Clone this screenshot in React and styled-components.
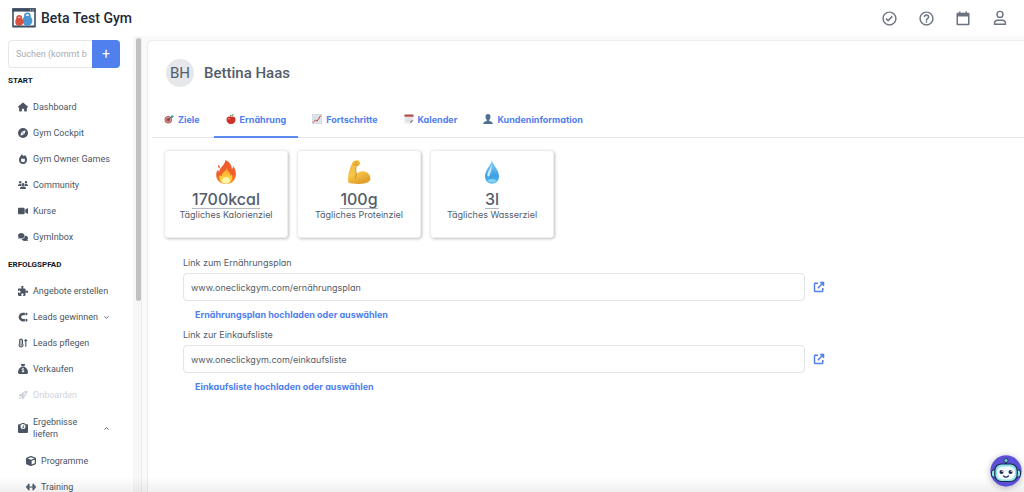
import styled, { createGlobalStyle, css } from "styled-components";
import {
    FaHouse,
    FaCompass,
    FaUsers,
    FaVideo,
    FaComments,
    FaPuzzlePiece,
    FaMagnet,
    FaTemperatureArrowUp,
    FaSackDollar,
    FaWeightScale,
    FaCube,
} from "react-icons/fa6";
import { IoRocketSharp } from "react-icons/io5";
import { BiCheckCircle, BiHelpCircle } from "react-icons/bi";
import { ChevronDown, ChevronUp } from "lucide-react";

const Logo = () => (
    <svg width="24" height="20" viewBox="0 0 24 20" aria-hidden="true">
        <rect x="1" y="1" width="22" height="17.5" fill="#fff" stroke="#3f4d63" strokeWidth="1.6" />
        <rect x="0.4" y="0.4" width="23.2" height="3.2" fill="#3f4d63" />
        <path d="M18 2h1M20.5 2h1" stroke="#fff" strokeWidth="0.9" />
        <path d="M13 9.5V7.4Q13 5.4 15.4 5.4t2.4 2v2.1" fill="none" stroke="#4b97d2" strokeWidth="1.8" />
        <circle cx="15.4" cy="12.8" r="5" fill="#4b97d2" />
        <path d="M5.2 12V9.4Q5.2 7.8 7.2 7.8T9.2 9.400V12" fill="none" stroke="#d9503f" strokeWidth="1.8" />
        <circle cx="7.2" cy="13.8" r="4" fill="#d9503f" />
        <path d="M1 18.5h22" stroke="#3f4d63" strokeWidth="1.6" />
    </svg>
);

const CalendarIcon = () => (
    <svg width="14" height="15" viewBox="0 0 14 15" fill="currentColor" aria-hidden="true">
        <path fillRule="evenodd" d="M1.5 1.8H3V.4h1.5v1.4h5V.4H11v1.4h1.5Q13.5 1.8 13.5 2.8v10.5q0 1-1 1h-11q-1 0-1-1V2.8q0-1 1-1zM2 5.6v7.2h10V5.6z" />
    </svg>
);

const PersonIcon = () => (
    <svg width="14" height="16" viewBox="0 0 14 16" fill="none" stroke="currentColor" strokeWidth="1.4" aria-hidden="true">
        <circle cx="7" cy="4.4" r="3" />
        <path d="M1.5 14.2v-.7q0-3.2 3.2-3.2h4.6q3.2 0 3.2 3.2v.7z" strokeLinejoin="round" />
    </svg>
);

const OpenIcon = () => (
    <svg width="12" height="12" viewBox="0 0 12 12" fill="none" stroke="currentColor" strokeWidth="1.5" aria-hidden="true">
        <path d="M5 2.2H2.2Q1.500 2.200 1.500 2.900v6.900q0 .7.7.7h6.900q.7 0 .7-.7V7M4.800 7.200l5.400-5.400M7 1.500h3.500V5" />
    </svg>
);

const FlameIcon = () => (
    <svg width="10" height="10" viewBox="0 0 20 20" aria-hidden="true">
        <path fill="currentColor" fillRule="evenodd" d="M8 0c.4 2 2.2 3 3.8 4.3L13.5 2C16.5 4.5 18 8 18 11.5a8 8.3 0 0 1-16 0C2 7.5 4.5 5 8 0zM7.5 9C6.400 10.300 6 11.200 6 12.300a4 4 0 0 0 8 0c0-1.300-.4-2.400-1.100-3.300l-1.600 1.600L9.600 8 8.400 10.200z" />
    </svg>
);

const BarbellIcon = () => (
    <svg width="11" height="10" viewBox="0 0 22 20" fill="currentColor" aria-hidden="true">
        <path d="M0 8.5h2V11.5H0zM2 5h2v10H2zM4.5 3h3.2v14H4.5zM7.7 8.7h6.6v2.6H7.7zM14.3 3h3.2v14h-3.2zM18 5h2v10h-2zM20 8.5h2v3h-2z" />
    </svg>
);

const Fire = ({ size }) => (
    <svg width={size} height={size} viewBox="0 0 24 24" aria-hidden="true">
        <defs>
            <linearGradient id="fireOuter" x1="0" y1="0" x2="0" y2="1">
                <stop offset="0" stopColor="#ef5a32" />
                <stop offset="0.6" stopColor="#f0602c" />
                <stop offset="1" stopColor="#f99a24" />
            </linearGradient>
            <linearGradient id="fireInner" x1="0" y1="0" x2="0" y2="1">
                <stop offset="0" stopColor="#fb9b28" />
                <stop offset="0.7" stopColor="#fdd33d" />
                <stop offset="1" stopColor="#fff19a" />
            </linearGradient>
        </defs>
        <path fill="url(#fireOuter)" d="M11.3 0c4 1.6 6.4 4.7 6.6 9 .9-.5 1.2-1.6 1-3 2.200 2 3 5 3 8.300C21.900 20 18 24 12 24S2.200 20.400 2.200 15c0-2.200.6-4 1.800-5.300.2 1 .6 1.600 1.300 2C5.200 7.500 11.500 5 11.300 0z" />
        <path fill="#ef6a3e" d="M4.3 4.8c1.5.8 2 2 1.2 3.600-1.400-.7-2-2-1.200-3.600z" />
        <path fill="url(#fireInner)" d="M12.6 7.5c.2 3 3.8 4.7 3.8 8.2.9-.3 1.300-1 1.400-1.900 1.500 4.800-.5 9.600-5.700 9.700-5.300 0-7.600-4-6.300-8.500.6.800 1.200 1.100 2 1.100-.5-3.900 4.700-4.700 4.800-8.600z" />
        <ellipse cx="12" cy="20.3" rx="3.5" ry="3.2" fill="#fff4ae" />
    </svg>
);

const Biceps = ({ size }) => (
    <svg width={size} height={size} viewBox="0 0 24 24" aria-hidden="true">
        <defs>
            <linearGradient id="skin" x1="0" y1="0" x2="0.4" y2="1">
                <stop offset="0" stopColor="#f0b83c" />
                <stop offset="0.6" stopColor="#f6c648" />
                <stop offset="1" stopColor="#e3a02c" />
            </linearGradient>
        </defs>
        <path fill="url(#skin)" d="M5.5 2.5C6.5.8 9.5-.3 11.4.6c1.7.8 2 2.7 1 4.4-.6 1.2-1.8 1.6-3.2 1.3C8.600 9 8.800 11.400 9.400 14c2.400-2.800 6-3.300 9-2.300 3.800 1.200 5.700 5.300 4.800 8-1.200 3-5.500 4.100-10.700 4.200-4.500.1-9-.2-11.200-1.400C.2 15.500 2.500 8.500 5.500 2.500z" />
        <path fill="none" stroke="#c98420" strokeWidth="0.8" strokeLinecap="round" d="M6.3 4.2c1.5 1 3.5.9 5 .1M8.2 2c.5.7 1.2 1 2.1.9M9.4 14c-.8 1.3-1 2.6-.9 4M9 6.4c-.4 2.7-.2 5.2.4 7.6" />
    </svg>
);

const Drop = ({ size }) => (
    <svg width={size} height={size} viewBox="0 0 24 24" aria-hidden="true">
        <defs>
            <linearGradient id="water" x1="0" y1="0" x2="0" y2="1">
                <stop offset="0" stopColor="#8fd0f2" />
                <stop offset="0.65" stopColor="#3f9fe5" />
                <stop offset="1" stopColor="#55b9f2" />
            </linearGradient>
        </defs>
        <path fill="url(#water)" d="M12 .5c1.5 5 7 10 7 15.8 0 4.4-3 7.4-7 7.4s-7-3-7-7.4C5 10.5 10.5 5.5 12 .5z" />
        <path fill="#c9ebfa" d="M11.8 4.500c.4 4-1.200 7.500-2 10.600-.4 1.900-2.600 1.700-2.500-.2C7.500 11.500 10.700 8.500 11.800 4.500z" />
        <ellipse cx="12" cy="20.8" rx="4" ry="1.7" fill="#82d4f7" />
    </svg>
);

const TargetGlyph = () => (
    <svg width="10" height="10" viewBox="0 0 20 20" aria-hidden="true">
        <circle cx="8.5" cy="11.5" r="7.5" fill="#b5605c" />
        <circle cx="8.5" cy="11.5" r="5.4" fill="#d9b5b2" />
        <circle cx="8.5" cy="11.5" r="4.2" fill="#b04848" />
        <path d="M8.5 11.5l6-6" stroke="#45505c" strokeWidth="2" />
        <path d="M13 6.5L16.5 1l.8 2.5 2.7.5-3.5 3.8z" fill="#3a8fb5" />
    </svg>
);

const AppleGlyph = () => (
    <svg width="10" height="10" viewBox="0 0 20 20" aria-hidden="true">
        <path fill="#cf3027" d="M10 6C6 3.5 1 5.5 1 11c0 4.5 3.5 9 6.500 9 1 0 1.700-.5 2.500-.5s1.500.5 2.500.5c3 0 6.500-4.500 6.500-9 0-5.500-5-7.500-9-5z" />
        <path d="M10 6.5Q9.8 4 8.5 2" stroke="#6b3b20" strokeWidth="1.3" fill="none" />
        <path fill="#5c9d37" d="M10.5 4C10.8 1.5 13 0 15.5.3 15.3 2.8 13 4.3 10.5 4z" />
        <ellipse cx="6" cy="9.5" rx="2" ry="1.6" fill="#f08a78" />
    </svg>
);

const ChartGlyph = () => (
    <svg width="10" height="10" viewBox="0 0 20 20" aria-hidden="true">
        <rect x="0.5" y="0.5" width="19" height="19" fill="#e8edf0" stroke="#bcc7ce" />
        <path d="M5.5 1v18M10 1v18M14.5 1v18M1 5.5h18M1 10h18M1 14.5h18" stroke="#c7d3da" />
        <path d="M2 17l5-5 3 2.5L17.5 3" fill="none" stroke="#c4413c" strokeWidth="2" />
    </svg>
);

const CalendarGlyph = () => (
    <svg width="10" height="10" viewBox="0 0 20 20" aria-hidden="true">
        <path d="M1 1h18v12l-6 6H1z" fill="#e9e9e9" />
        <path d="M1 1h18v4.5H1z" fill="#b0504e" />
        <path d="M19 12.5l-6.5 6.5 1-5.5z" fill="#66706b" />
        <path d="M4 9.5h12M4 13h8" stroke="#cfd3d3" />
    </svg>
);

const BustGlyph = () => (
    <svg width="10" height="10" viewBox="0 0 20 20" aria-hidden="true">
        <path fill="#4f7192" d="M10 0c3.3 0 5 2.3 5 5.5 0 2.6-1 4.8-2.5 6V14c3 .8 6.5 1.7 7.5 6H0c1-4.3 4.5-5.2 7.5-6v-2.5C6 10.3 5 8.1 5 5.500 5 2.300 6.700 0 10 0z" />
    </svg>
);

const Robot = () => (
    <svg width="32" height="32" viewBox="0 0 32 32" aria-hidden="true">
        <circle cx="16" cy="16" r="15.7" fill="#5b50d6" />
        <path d="M16 10V6" stroke="#1d2b4f" strokeWidth="1.4" />
        <circle cx="16" cy="5.5" r="2" fill="#6fd3d8" stroke="#1d2b4f" strokeWidth="0.8" />
        <rect x="1.5" y="15" width="5" height="7" rx="2" fill="#8edfe6" stroke="#1d2b4f" strokeWidth="1" />
        <rect x="25.5" y="15" width="5" height="7" rx="2" fill="#8edfe6" stroke="#1d2b4f" strokeWidth="1" />
        <rect x="4.8" y="9" width="22.4" height="17.5" rx="6.5" fill="#8ae3e6" stroke="#1d2b4f" strokeWidth="1.2" />
        <rect x="7" y="11.5" width="18" height="13" rx="5.5" fill="#f4fbff" />
        <circle cx="11.5" cy="17" r="2" fill="#1f2850" />
        <circle cx="20.5" cy="17" r="2" fill="#1f2850" />
        <circle cx="12.2" cy="16.3" r="0.7" fill="#fff" />
        <circle cx="21.2" cy="16.3" r="0.7" fill="#fff" />
        <path d="M13.5 21q2.5 2.2 5 0" fill="none" stroke="#1f2850" strokeWidth="1.2" strokeLinecap="round" />
    </svg>
);

const startLinks = [
    { label: "Dashboard", icon: <FaHouse /> },
    { label: "Gym Cockpit", icon: <FaCompass /> },
    { label: "Gym Owner Games", icon: <FlameIcon /> },
    { label: "Community", icon: <FaUsers /> },
    { label: "Kurse", icon: <FaVideo /> },
    { label: "GymInbox", icon: <FaComments /> },
];

const pathLinks = [
    { label: "Angebote erstellen", icon: <FaPuzzlePiece /> },
    { label: "Leads gewinnen", icon: <FaMagnet transform="rotate(90)" />, arrow: "down" },
    { label: "Leads pflegen", icon: <FaTemperatureArrowUp /> },
    { label: "Verkaufen", icon: <FaSackDollar /> },
    { label: "Onboarden", icon: <IoRocketSharp />, muted: true },
    { label: "Ergebnisse liefern", icon: <FaWeightScale />, arrow: "up", tall: true },
    { label: "Programme", icon: <FaCube />, nested: true },
    { label: "Training", icon: <BarbellIcon />, nested: true },
];

const tabs = [
    { label: "Ziele", icon: <TargetGlyph /> },
    { label: "Ernährung", icon: <AppleGlyph />, active: true },
    { label: "Fortschritte", icon: <ChartGlyph /> },
    { label: "Kalender", icon: <CalendarGlyph /> },
    { label: "Kundeninformation", icon: <BustGlyph /> },
];

const goals = [
    { value: "1700kcal", caption: "Tägliches Kalorienziel", icon: <Fire size={24} /> },
    { value: "100g", caption: "Tägliches Proteinziel", icon: <Biceps size={24} /> },
    { value: "3l", caption: "Tägliches Wasserziel", icon: <Drop size={24} /> },
];

const fields = [
    {
        id: "plan",
        label: "Link zum Ernährungsplan",
        value: "www.oneclickgym.com/ernährungsplan",
        action: "Ernährungsplan hochladen oder auswählen",
    },
    {
        id: "shopping",
        label: "Link zur Einkaufsliste",
        value: "www.oneclickgym.com/einkaufsliste",
        action: "Einkaufsliste hochladen oder auswählen",
    },
];

const NavList = ({ items }) => (
    <List>
        {items.map((item) => (
            <li key={item.label}>
                <NavLink href="#" $muted={item.muted} $nested={item.nested} $tall={item.tall}>
                    <NavIcon>{item.icon}</NavIcon>
                    <NavText $narrow={item.tall}>{item.label}</NavText>
                    {item.arrow === "down" && <ChevronDown size={7} strokeWidth={3} />}
                    {item.arrow === "up" && <ChevronUp size={7} strokeWidth={3} />}
                </NavLink>
            </li>
        ))}
    </List>
);

const App = () => {
    return (
        <>
            <GlobalStyle />
            <Page>
                <Header>
                    <Brand href="#">
                        <Logo />
                        Beta Test Gym
                    </Brand>
                    <HeaderActions>
                        <IconButton aria-label="Aufgaben"><BiCheckCircle size={17} /></IconButton>
                        <IconButton aria-label="Hilfe"><BiHelpCircle size={17} /></IconButton>
                        <IconButton aria-label="Kalender"><CalendarIcon /></IconButton>
                        <IconButton aria-label="Profil"><PersonIcon /></IconButton>
                    </HeaderActions>
                </Header>

                <Body>
                    <Sidebar>
                        <Search>
                            <SearchInput aria-label="Suchen" placeholder="Suchen (kommt bald)" />
                            <AddButton aria-label="Hinzufügen">+</AddButton>
                        </Search>
                        <NavTitle>START</NavTitle>
                        <NavList items={startLinks} />
                        <NavTitle $spaced>ERFOLGSPFAD</NavTitle>
                        <NavList items={pathLinks} />
                    </Sidebar>
                    <ScrollTrack>
                        <ScrollThumb />
                    </ScrollTrack>

                    <Panel>
                        <Client>
                            <Avatar>BH</Avatar>
                            <ClientName>Bettina Haas</ClientName>
                        </Client>

                        <Tabs role="tablist">
                            {tabs.map((tab) => (
                                <Tab key={tab.label} role="tab" aria-selected={!!tab.active} $active={tab.active}>
                                    {tab.icon}
                                    {tab.label}
                                </Tab>
                            ))}
                        </Tabs>

                        <Goals>
                            {goals.map((goal) => (
                                <Goal key={goal.value}>
                                    {goal.icon}
                                    <GoalValue>{goal.value}</GoalValue>
                                    <GoalCaption>{goal.caption}</GoalCaption>
                                </Goal>
                            ))}
                        </Goals>

                        <Form>
                            {fields.map((field) => (
                                <Field key={field.id}>
                                    <Label htmlFor={field.id}>{field.label}</Label>
                                    <FieldRow>
                                        <TextInput id={field.id} defaultValue={field.value} />
                                        <OpenLink href="#" aria-label={field.label + " öffnen"}>
                                            <OpenIcon />
                                        </OpenLink>
                                    </FieldRow>
                                    <UploadButton type="button">{field.action}</UploadButton>
                                </Field>
                            ))}
                        </Form>
                    </Panel>
                </Body>

                <BottomFade />
                <ChatButton aria-label="Chat">
                    <Robot />
                </ChatButton>
            </Page>
        </>
    );
};

const GlobalStyle = createGlobalStyle`
    * {
        box-sizing: border-box;
    }

    body {
        margin: 0;
        background: #fff;
        color: #535d6b;
        font-family: Roboto, "Liberation Sans", sans-serif;
    }

    button, input {
        font-family: inherit;
        color: inherit;
    }

    button {
        padding: 0;
        border: 0;
        background: none;
        cursor: pointer;
    }

    a {
        color: inherit;
        text-decoration: none;
    }
`;

const interText = css`
    font-family: Inter, "Liberation Sans", sans-serif;
    font-feature-settings: "cv11";
`;

const Page = styled.div`
    display: flex;
    flex-direction: column;
    height: 100vh;
    overflow: hidden;
`;

const Header = styled.header`
    display: flex;
    flex: none;
    align-items: center;
    justify-content: space-between;
    height: 36px;
    padding: 0 15px 0 12px;
`;

const Brand = styled.a`
    display: flex;
    align-items: center;
    gap: 5px;
    color: #1f2937;
    font-size: 14px;
    font-weight: 500;
`;

const HeaderActions = styled.div`
    display: flex;
    gap: 19px;
    color: #6b7280;
`;

const IconButton = styled.button`
    display: flex;
    align-items: center;
    justify-content: center;
    width: 18px;
    height: 18px;
`;

const Body = styled.div`
    display: flex;
    flex: 1;
    min-height: 0;
    background: #f9fafb;
`;

const Sidebar = styled.nav`
    flex: none;
    width: 133px;
    padding: 4px 13px 0 8px;
    overflow: hidden;
    background: #fff;
`;

const Search = styled.div`
    display: flex;
    height: 28px;
`;

const SearchInput = styled.input`
    flex: 1;
    min-width: 0;
    padding: 0 5px 0 7px;
    border: 1px solid #e5e7eb;
    border-right: 0;
    border-radius: 4px 0 0 4px;
    font-size: 9px;
    outline: none;

    &::placeholder {
        color: #a7adb8;
    }
`;

const AddButton = styled.button`
    width: 28px;
    border-radius: 0 4px 4px 0;
    background: #4f80ee;
    color: #fff;
    font-size: 14px;
`;

const NavTitle = styled.h2`
    margin: ${(props) => (props.$spaced ? "2px" : "0")} 0 0;
    color: #111827;
    font-size: 8px;
    font-weight: 700;
    line-height: 26px;
`;

const List = styled.ul`
    margin: 0;
    padding: 0;
    list-style: none;
`;

const NavLink = styled.a`
    display: flex;
    align-items: center;
    gap: 5px;
    height: ${(props) => (props.$tall ? "40px" : "26px")};
    padding-left: ${(props) => (props.$nested ? "18px" : "10px")};
    color: ${(props) => (props.$muted ? "#d1d5db" : "#4b5563")};
    font-size: 9px;
    line-height: 12px;
    white-space: nowrap;
`;

const NavIcon = styled.span`
    display: flex;
    flex: none;
    justify-content: center;
    width: 10px;
    font-size: 10px;
`;

const NavText = styled.span`
    width: ${(props) => (props.$narrow ? "65px" : "auto")};
    padding-right: ${(props) => (props.$narrow ? "16px" : "0")};
    white-space: ${(props) => (props.$narrow ? "normal" : "nowrap")};
`;

const ScrollTrack = styled.div`
    flex: none;
    width: 9px;
    padding: 2px 1px 0 3px;
    background: #f7f7f7;
    border-right: 1px solid #ececee;
`;

const ScrollThumb = styled.div`
    width: 5px;
    height: 58%;
    border-radius: 3px;
    background: #c1c1c1;
`;

const Panel = styled.main`
    flex: 1;
    min-width: 0;
    margin: 5px 0 0 6px;
    background: #fff;
    border-radius: 4px 0 0 0;
    box-shadow: 0 0 2px rgba(0, 0, 0, 0.2);
`;

const Client = styled.div`
    display: flex;
    align-items: center;
    gap: 10px;
    height: 64px;
    padding-left: 18px;
`;

const Avatar = styled.div`
    width: 28px;
    height: 28px;
    border-radius: 50%;
    background: #e5e7eb;
    font-size: 15px;
    line-height: 28px;
    text-align: center;
`;

const ClientName = styled.h1`
    margin: 0;
    font-size: 15px;
    font-weight: 500;
`;

const Tabs = styled.div`
    display: flex;
    gap: 2px;
    margin-left: 4px;
    border-bottom: 1px solid #e2e5ea;
`;

const Tab = styled.button`
    ${interText}
    display: flex;
    align-items: center;
    gap: 4px;
    height: 33px;
    margin-bottom: -1px;
    padding: 0 12px 3px;
    border-bottom: 2px solid ${(props) => (props.$active ? "#5c8af0" : "transparent")};
    color: #4f80ee;
    font-size: 9px;
    font-weight: 700;
    white-space: nowrap;
`;

const Goals = styled.section`
    display: flex;
    gap: 9px;
    padding: 12px 16px 0;
`;

const Goal = styled.article`
    ${interText}
    display: flex;
    flex-direction: column;
    align-items: center;
    width: 124px;
    height: 88px;
    padding-top: 9px;
    border: 1px solid #ededf0;
    border-radius: 4px;
    box-shadow: 1px 1px 3px rgba(0, 0, 0, 0.25);
`;

const GoalValue = styled.strong`
    margin-top: 7px;
    border-bottom: 1px solid #b4b9c1;
    font-size: 16px;
    font-weight: 500;
    line-height: 17px;
`;

const GoalCaption = styled.span`
    font-size: 9px;
    line-height: 12px;
`;

const Form = styled.form`
    ${interText}
    padding: 18px 0 0 35px;
`;

const Field = styled.div`
    display: flex;
    flex-direction: column;
    align-items: flex-start;
`;

const Label = styled.label`
    font-size: 9px;
    line-height: 14px;
    padding-bottom: 3px;
`;

const FieldRow = styled.div`
    display: flex;
    align-items: center;
    gap: 8px;
    width: 100%;
`;

const TextInput = styled.input`
    flex: none;
    width: 74%;
    height: 28px;
    padding: 0 7px;
    border: 1px solid #e2e4e8;
    border-radius: 4px;
    background: #fff;
    font-size: 9px;
    font-feature-settings: inherit;
    outline: none;
`;

const OpenLink = styled.a`
    display: flex;
    color: #4f80ee;
`;

const UploadButton = styled.button`
    height: 27px;
    margin-left: 12px;
    color: #4f80ee;
    font-size: 9px;
    font-weight: 700;
    font-feature-settings: inherit;
`;

const BottomFade = styled.div`
    position: fixed;
    right: 0;
    bottom: 0;
    left: 0;
    height: 16px;
    background: linear-gradient(rgba(0, 0, 0, 0), rgba(0, 0, 0, 0.06));
    pointer-events: none;
`;

const ChatButton = styled.button`
    position: fixed;
    right: 2px;
    bottom: 5px;
    display: flex;
    border-radius: 50%;
    box-shadow: 0 1px 6px rgba(0, 0, 0, 0.25);
`;

export default App;
